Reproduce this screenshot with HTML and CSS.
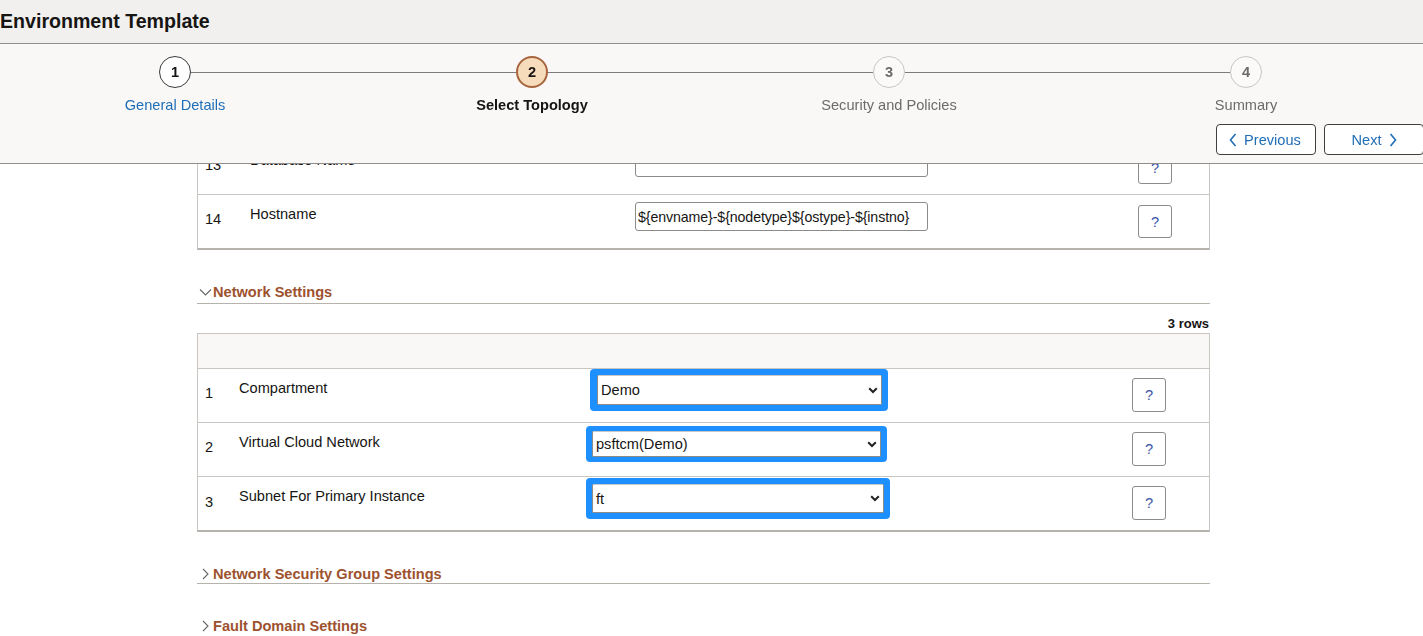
FILE: index.html
```html
<!DOCTYPE html>
<html lang="en">
<head>
<meta charset="utf-8">
<title>Environment Template</title>
<link rel="stylesheet" href="styles.css">
</head>
<body>
<header class="app-header">
  <div class="titlebar"><h1>Environment Template</h1></div>
  <div class="wizard">
    <ol class="steps">
      <li class="step done"><span class="circle">1</span><span class="step-label">General Details</span></li>
      <li class="step current"><span class="circle">2</span><span class="step-label">Select Topology</span></li>
      <li class="step todo"><span class="circle">3</span><span class="step-label">Security and Policies</span></li>
      <li class="step todo last"><span class="circle">4</span><span class="step-label">Summary</span></li>
    </ol>
    <div class="nav-buttons">
      <button class="nav-btn prev"><svg width="8" height="14" viewBox="0 0 8 14"><path d="M6.5 1 L1.5 7 L6.5 13" fill="none" stroke="#1f6db6" stroke-width="1.6"/></svg><span>Previous</span></button>
      <button class="nav-btn next"><span>Next</span><svg width="8" height="14" viewBox="0 0 8 14"><path d="M1.5 1 L6.5 7 L1.5 13" fill="none" stroke="#1f6db6" stroke-width="1.6"/></svg></button>
    </div>
  </div>
</header>

<main class="content">
  <div class="grid-table t1">
    <div class="row">
      <div class="c-num">13</div>
      <div class="c-label">Database Name</div>
      <div class="c-field"><input class="text-input" type="text" value=""></div>
      <div class="c-help"><button class="help">?</button></div>
    </div>
    <div class="row">
      <div class="c-num">14</div>
      <div class="c-label">Hostname</div>
      <div class="c-field"><input class="text-input" type="text" value="${envname}-${nodetype}${ostype}-${instno}"></div>
      <div class="c-help"><button class="help">?</button></div>
    </div>
  </div>

  <h2 class="section-head open"><svg class="chev" width="13" height="10" viewBox="0 0 13 10"><path d="M1 2.5 L6.5 8 L12 2.5" fill="none" stroke="#666" stroke-width="1.1"/></svg>Network Settings</h2>
  <div class="row-count">3 rows</div>
  <div class="grid-table t2">
    <div class="head-row"></div>
    <div class="row r1">
      <div class="c-num">1</div>
      <div class="c-label">Compartment</div>
      <div class="c-field"><div class="sel-wrap w1"><div class="sel"><span>Demo</span><svg width="10" height="7" viewBox="0 0 10 7"><path d="M1.2 1.2 L5 5 L8.8 1.2" fill="none" stroke="#222" stroke-width="2"/></svg></div></div></div>
      <div class="c-help"><button class="help">?</button></div>
    </div>
    <div class="row r2">
      <div class="c-num">2</div>
      <div class="c-label">Virtual Cloud Network</div>
      <div class="c-field"><div class="sel-wrap w2"><div class="sel"><span>psftcm(Demo)</span><svg width="10" height="7" viewBox="0 0 10 7"><path d="M1.2 1.2 L5 5 L8.8 1.2" fill="none" stroke="#222" stroke-width="2"/></svg></div></div></div>
      <div class="c-help"><button class="help">?</button></div>
    </div>
    <div class="row r3">
      <div class="c-num">3</div>
      <div class="c-label">Subnet For Primary Instance</div>
      <div class="c-field"><div class="sel-wrap w3"><div class="sel"><span>ft</span><svg width="10" height="7" viewBox="0 0 10 7"><path d="M1.2 1.2 L5 5 L8.8 1.2" fill="none" stroke="#222" stroke-width="2"/></svg></div></div></div>
      <div class="c-help"><button class="help">?</button></div>
    </div>
  </div>

  <h2 class="section-head closed nsg"><svg class="chev" width="13" height="12" viewBox="0 0 13 12"><path d="M4 1 L9 6 L4 11" fill="none" stroke="#666" stroke-width="1.1"/></svg>Network Security Group Settings</h2>
  <h2 class="section-head closed fd"><svg class="chev" width="13" height="12" viewBox="0 0 13 12"><path d="M4 1 L9 6 L4 11" fill="none" stroke="#666" stroke-width="1.1"/></svg>Fault Domain Settings</h2>
</main>
</body>
</html>
```

FILE: styles.css
```css
html, body {
  margin: 0;
  padding: 0;
}
body {
  font-family: "Liberation Sans", Arial, sans-serif;
  font-size: 14.6px;
  color: #161513;
  background: #ffffff;
  overflow: hidden;
}

/* ---------- fixed header ---------- */
.app-header {
  position: fixed;
  top: 0;
  left: 0;
  right: 0;
  z-index: 10;
}
.titlebar {
  height: 43px;
  background: #f1f0ef;
  border-bottom: 1px solid #8f8e8c;
}
.titlebar h1 {
  margin: 0;
  font-size: 19.6px;
  line-height: 43px;
  font-weight: bold;
  color: #161513;
}
.wizard {
  box-sizing: border-box;
  height: 120px;
  padding-top: 12px;
  background: #f9f8f7;
  border-bottom: 1px solid #8f8e8c;
}
.steps {
  list-style: none;
  margin: 0 0 0 -3.5px;
  padding: 0;
  display: flex;
}
.step {
  position: relative;
  width: 357px;
  flex: none;
  display: flex;
  flex-direction: column;
  align-items: center;
}
.step::after {
  content: "";
  position: absolute;
  top: 16px;
  left: calc(50% + 16px);
  width: calc(100% - 32px);
  height: 1px;
  background: #7d7c7a;
}
.step.last::after {
  display: none;
}
.circle {
  width: 32px;
  height: 32px;
  box-sizing: border-box;
  border-radius: 50%;
  display: flex;
  align-items: center;
  justify-content: center;
  font-weight: bold;
  font-size: 14.6px;
}
.step.done .circle {
  border: 1px solid #3a3a3a;
  background: #ffffff;
  color: #161513;
}
.step.current .circle {
  border: 2px solid #a8653d;
  background: #f7dcbc;
  color: #161513;
}
.step.todo .circle {
  border: 1px solid #c6c5c3;
  background: #fbfaf9;
  color: #6c6b69;
}
.step-label {
  margin-top: 9px;
  line-height: 16px;
  font-size: 14.6px;
}
.step.done .step-label { color: #1f6db6; }
.step.current .step-label { font-weight: bold; color: #161513; }
.step.todo .step-label { color: #6c6b69; }

.nav-buttons {
  display: flex;
  justify-content: flex-end;
  gap: 8px;
  margin-top: 11px;
  margin-right: -1px;
}
.nav-btn {
  height: 31px;
  width: 100px;
  box-sizing: border-box;
  border: 1px solid #3f3f3f;
  border-radius: 4px;
  background: #ffffff;
  color: #1f6db6;
  font-family: "Liberation Sans", Arial, sans-serif;
  font-size: 14.6px;
  display: flex;
  align-items: center;
  justify-content: center;
  gap: 7px;
  padding: 0;
}
.nav-btn.prev { padding-right: 2px; }

/* ---------- content ---------- */
.content {
  padding-top: 140px;
  margin-left: 197px;
  width: 1013px;
}
.grid-table {
  border-left: 1px solid #c9c6c2;
  border-right: 1px solid #c9c6c2;
  border-bottom: 2px solid #b6b2ac;
}
.row {
  display: grid;
  height: 53px;
  border-top: 1px solid #c9c6c2;
}
.t1 .row {
  grid-template-columns: 52px 385px 503px 1fr;
}
.t2 .row {
  grid-template-columns: 41px 347px 546px 1fr;
}
.c-num {
  padding-left: 7px;
  padding-top: 16px;
  line-height: 16px;
}
.c-label {
  padding-top: 11px;
  line-height: 16px;
}
.t1 .c-field { padding-top: 7px; }
.t1 .c-help { padding-top: 10px; }
.t2 .c-help { padding-top: 9px; }

.text-input {
  width: 293px;
  height: 29px;
  box-sizing: border-box;
  border: 1px solid #8c8b89;
  border-radius: 3px;
  padding: 0 0 0 2px;
  font-family: "Liberation Sans", Arial, sans-serif;
  font-size: 14.2px;
  letter-spacing: -0.1px;
  color: #161513;
  background: #fff;
}
.help {
  width: 34px;
  height: 34px;
  box-sizing: border-box;
  border: 1px solid #8c8b89;
  border-radius: 3px;
  background: #ffffff;
  color: #3b55a8;
  font-family: "Liberation Sans", Arial, sans-serif;
  font-size: 14.6px;
  padding: 0;
}
.t1 .help { height: 33px; }

.section-head {
  margin: 33px 0 0;
  font-size: 14.6px;
  font-weight: bold;
  line-height: 18px;
  color: #9d522f;
  border-bottom: 1px solid #b6b2ac;
  padding-bottom: 2px;
  display: flex;
  align-items: center;
}
.section-head .chev {
  flex: none;
  margin-left: 2px;
  margin-right: 1px;
}
.section-head.nsg { margin-top: 33px; padding-bottom: 0; }
.section-head.fd { margin-top: 33px; border-bottom: none; }

.row-count {
  margin-top: 13px;
  margin-bottom: 2px;
  text-align: right;
  padding-right: 1px;
  font-size: 13px;
  font-weight: bold;
  line-height: 14px;
}
.head-row {
  height: 34px;
  border-top: 1px solid #c9c6c2;
  background: #f9f8f7;
}

.sel-wrap {
  background: #1e8fff;
  border-radius: 4px;
  box-sizing: border-box;
}
.sel {
  height: 100%;
  box-sizing: border-box;
  background: #ffffff;
  border: 1px solid #8c8b89;
  border-top-color: #c8c8c8;
  border-radius: 2px;
  display: flex;
  align-items: center;
  justify-content: space-between;
  padding: 0 3px 0 3px;
  font-size: 14.6px;
  color: #161513;
}
.sel svg { flex: none; }
.w1 {
  width: 298px;
  height: 42px;
  margin-left: 4px;
  padding: 6px 6px 6px 7px;
}
.r1 .c-field { padding-top: 0; }
.w2 {
  width: 301px;
  height: 36px;
  padding: 5px 6px;
}
.r2 .c-field { padding-top: 3px; }
.w3 {
  width: 304px;
  height: 41px;
  padding: 6px 6px 6px 6px;
}
.r3 .c-field { padding-top: 1px; }
.r3 .c-num { padding-top: 17px; }
```
